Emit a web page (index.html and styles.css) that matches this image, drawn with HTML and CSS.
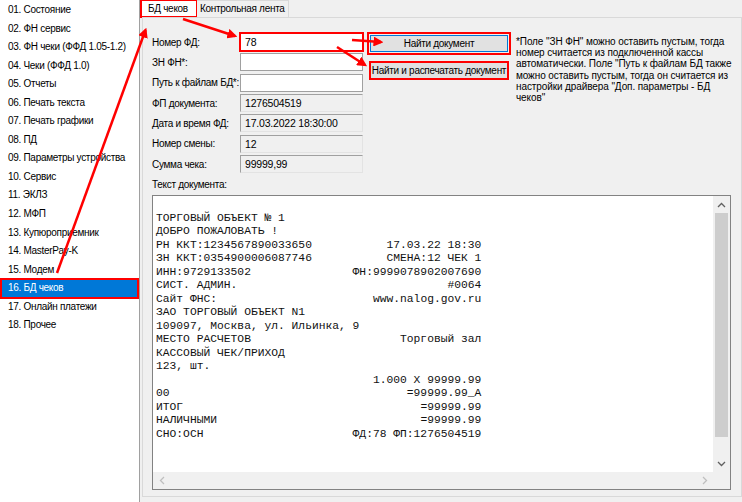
FILE: index.html
```html
<!DOCTYPE html>
<html>
<head>
  <title>БД чеков</title>
  <link rel="stylesheet" href="styles.css">
</head>
<body>
<div class="app">
  <ul class="menu">
    <li>01. Состояние</li>
    <li>02. ФН сервис</li>
    <li>03. ФН чеки (ФФД 1.05-1.2)</li>
    <li>04. Чеки (ФФД 1.0)</li>
    <li>05. Отчеты</li>
    <li>06. Печать текста</li>
    <li>07. Печать графики</li>
    <li>08. ПД</li>
    <li>09. Параметры устройства</li>
    <li>10. Сервис</li>
    <li>11. ЭКЛЗ</li>
    <li>12. МФП</li>
    <li>13. Купюроприемник</li>
    <li>14. MasterPay-K</li>
    <li>15. Модем</li>
    <li class="selected">16. БД чеков</li>
    <li>17. Онлайн платежи</li>
    <li>18. Прочее</li>
  </ul>

  <div class="main">
    <div class="tabs">
      <span class="tab active">БД чеков</span>
      <span class="tab">Контрольная лента</span>
    </div>
    <div class="page">
      <div class="top">
        <div class="form">
          <label>Номер ФД:</label>
          <input class="field marked" type="text" value="78">
          <label>ЗН ФН*:</label>
          <input class="field" type="text" value="">
          <label>Путь к файлам БД*:</label>
          <input class="field" type="text" value="">
          <label>ФП документа:</label>
          <input class="field readonly" type="text" value="1276504519" readonly>
          <label>Дата и время ФД:</label>
          <input class="field readonly" type="text" value="17.03.2022 18:30:00" readonly>
          <label>Номер смены:</label>
          <input class="field readonly" type="text" value="12" readonly>
          <label>Сумма чека:</label>
          <input class="field readonly" type="text" value="99999,99" readonly>
        </div>
        <div class="buttons">
          <button class="btn default marked" type="button">Найти документ</button>
          <button class="btn marked" type="button">Найти и распечатать документ</button>
        </div>
        <p class="note">
          *Поле "ЗН ФН" можно оставить пустым, тогда<br>
          номер считается из подключенной кассы<br>
          автоматически. Поле "Путь к файлам БД также<br>
          можно оставить пустым, тогда он считается из<br>
          настройки драйвера "Доп. параметры - БД<br>
          чеков"
        </p>
      </div>

      <div class="doc-label">Текст документа:</div>
      <div class="doc">
        <div class="doc-text">
          <div class="ln"></div>
          <div class="ln"><span>ТОРГОВЫЙ ОБЪЕКТ № 1</span></div>
          <div class="ln"><span>ДОБРО ПОЖАЛОВАТЬ !</span></div>
          <div class="ln"><span>РН ККТ:1234567890033650</span><span>17.03.22 18:30</span></div>
          <div class="ln"><span>ЗН ККТ:0354900006087746</span><span>СМЕНА:12 ЧЕК 1</span></div>
          <div class="ln"><span>ИНН:9729133502</span><span>ФН:9999078902007690</span></div>
          <div class="ln"><span>СИСТ. АДМИН.</span><span>#0064</span></div>
          <div class="ln"><span>Сайт ФНС:</span><span>www.nalog.gov.ru</span></div>
          <div class="ln"><span>ЗАО ТОРГОВЫЙ ОБЪЕКТ N1</span></div>
          <div class="ln"><span>109097, Москва, ул. Ильинка, 9</span></div>
          <div class="ln"><span>МЕСТО РАСЧЕТОВ</span><span>Торговый зал</span></div>
          <div class="ln"><span>КАССОВЫЙ ЧЕК/ПРИХОД</span></div>
          <div class="ln"><span>123, шт.</span></div>
          <div class="ln right"><span>1.000 X 99999.99</span></div>
          <div class="ln"><span>00</span><span>=99999.99_A</span></div>
          <div class="ln"><span>ИТОГ</span><span>=99999.99</span></div>
          <div class="ln"><span>НАЛИЧНЫМИ</span><span>=99999.99</span></div>
          <div class="ln"><span>СНО:ОСН</span><span>ФД:78 ФП:1276504519</span></div>
        </div>
        <div class="vscroll">
          <span class="arr"><svg width="9" height="6" viewBox="0 0 9 6"><path d="M1 5 L4.5 1.5 L8 5" fill="none" stroke="#606060" stroke-width="1.3"/></svg></span>
          <span class="thumb"></span>
          <span class="arr"><svg width="9" height="6" viewBox="0 0 9 6"><path d="M1 1 L4.5 4.5 L8 1" fill="none" stroke="#606060" stroke-width="1.3"/></svg></span>
        </div>
        <div class="hscroll">
          <span class="arr"><svg width="6" height="9" viewBox="0 0 6 9"><path d="M5 1 L1.5 4.5 L5 8" fill="none" stroke="#bfbfbf" stroke-width="1.3"/></svg></span>
          <span class="arr"><svg width="6" height="9" viewBox="0 0 6 9"><path d="M1 1 L4.5 4.5 L1 8" fill="none" stroke="#bfbfbf" stroke-width="1.3"/></svg></span>
        </div>
        <div class="corner"></div>
      </div>
    </div>
  </div>

  <!-- red annotation arrows drawn over the window -->
  <svg class="arrows" width="742" height="502" viewBox="0 0 742 502">
    <defs>
      <marker id="head" markerWidth="4" markerHeight="4" refX="3" refY="2" orient="auto" markerUnits="strokeWidth">
        <path d="M0,0 L4,2 L0,4 z" fill="#f00"/>
      </marker>
    </defs>
    <line x1="57" y1="273" x2="145.5" y2="30" stroke="#f00" stroke-width="2.5" marker-end="url(#head)"/>
    <line x1="183" y1="19" x2="235" y2="36" stroke="#f00" stroke-width="2.5" marker-end="url(#head)"/>
    <line x1="352" y1="40" x2="381" y2="42" stroke="#f00" stroke-width="2.5" marker-end="url(#head)"/>
    <line x1="337" y1="47" x2="365" y2="65" stroke="#f00" stroke-width="2.5" marker-end="url(#head)"/>
  </svg>
</div>
</body>
</html>
```

FILE: styles.css
```css
* { box-sizing: border-box; }

body {
  margin: 0;
  background: #f0f0f0;
  font-family: "Liberation Sans", Arial, sans-serif;
  font-size: 10px;
  letter-spacing: -0.3px;
  color: #000;
}

.app {
  position: relative;
  display: flex;
  width: 742px;
  height: 502px;
  overflow: hidden;
}

/* left list */
.menu {
  flex: none;
  list-style: none;
  margin: 0;
  padding: 1px 0 0;
  width: 140px;
  background: #fff;
  border-right: 1px solid #a0a0a0;
  overflow: hidden;
}
.menu li {
  height: 18.55px;
  line-height: 18.55px;
  padding-left: 8px;
  white-space: nowrap;
}
.menu li.selected {
  margin: 0 1px;
  padding-left: 7px;
  background: #0078d7;
  color: #fff;
  outline: 2px solid #f00;
  outline-offset: -1px;
}

/* tabs */
.main {
  flex: 1;
  display: flex;
  flex-direction: column;
  padding-bottom: 5px;
}
.tabs {
  display: flex;
  height: 17px;
  margin-left: 1px;
}
.tab {
  height: 17px;
  line-height: 15px;
  padding: 0 3px;
  border: 1px solid #d9d9d9;
  border-bottom: none;
  background: #f0f0f0;
  white-space: nowrap;
}
.tab + .tab { border-left: none; }
.tab.active {
  width: 56px;
  padding: 0 6px;
  background: #fff;
  outline: 2px solid #f00;
  outline-offset: -1px;
}

.page {
  flex: 1;
  display: flex;
  flex-direction: column;
  margin: 0 2px 0 2px;
  padding: 15px 10px 6px 9px;
  border: 1px solid #d9d9d9;
}

/* fields */
.top { display: flex; }
.form {
  display: grid;
  grid-template-columns: 88px 123px;
  grid-auto-rows: 18px;
  row-gap: 2.35px;
  align-items: center;
}
.form label { white-space: nowrap; }
.field {
  width: 123px;
  height: 18px;
  margin: 0;
  padding: 0 4px;
  border: 1px solid #a0a0a0;
  background: #fff;
  font: inherit;
  font-size: 10.5px;
  letter-spacing: -0.2px;
  color: #000;
}
.field.readonly {
  background: #f0f0f0;
  border-color: #a0a0a0 #e3e3e3 #e3e3e3 #a0a0a0;
}
.marked {
  outline: 2px solid #f00;
  outline-offset: -1px;
}

.buttons {
  display: flex;
  flex-direction: column;
  gap: 10px;
  margin: 2px 0 0 7px;
}
.btn {
  width: 138px;
  height: 17px;
  padding: 0;
  border: 1px solid #adadad;
  background: #e1e1e1;
  font: inherit;
  letter-spacing: -0.3px;
  white-space: nowrap;
  color: #000;
}
.btn.default {
  border-color: #0078d7;
  outline-offset: 1px;
}

.note {
  margin: 3px 0 0 8px;
  font-size: 10px;
  letter-spacing: -0.1px;
  line-height: 11.2px;
  white-space: nowrap;
}

/* document text */
.doc-label {
  margin-top: 6px;
  line-height: 12px;
}
.doc {
  flex: 1;
  display: grid;
  grid-template-columns: 1fr 17px;
  grid-template-rows: 1fr 17px;
  margin-top: 4px;
  border: 1px solid #828282;
  background: #fff;
  overflow: hidden;
}
.doc-text {
  padding: 2px 3px;
  font-family: "Liberation Mono", "Courier New", monospace;
  font-size: 11.3px;
  letter-spacing: 0;
  line-height: 13.5px;
  color: #111;
}
.ln {
  display: flex;
  justify-content: space-between;
  width: 48ch;
  height: 13.5px;
  white-space: pre;
}
.ln.right { justify-content: flex-end; }

.vscroll {
  display: flex;
  flex-direction: column;
  background: #f0f0f0;
}
.vscroll .arr {
  height: 17px;
  display: flex;
  align-items: center;
  justify-content: center;
}
.thumb {
  height: 224px;
  margin: 0 2px;
  background: #cdcdcd;
}
.vscroll .thumb + .arr { margin-top: auto; }
.hscroll {
  display: flex;
  justify-content: space-between;
  background: #f0f0f0;
}
.hscroll .arr {
  width: 17px;
  display: flex;
  align-items: center;
  justify-content: center;
}
.corner { background: #f0f0f0; }

.arrows {
  position: absolute;
  left: 0;
  top: 0;
  pointer-events: none;
}
```
